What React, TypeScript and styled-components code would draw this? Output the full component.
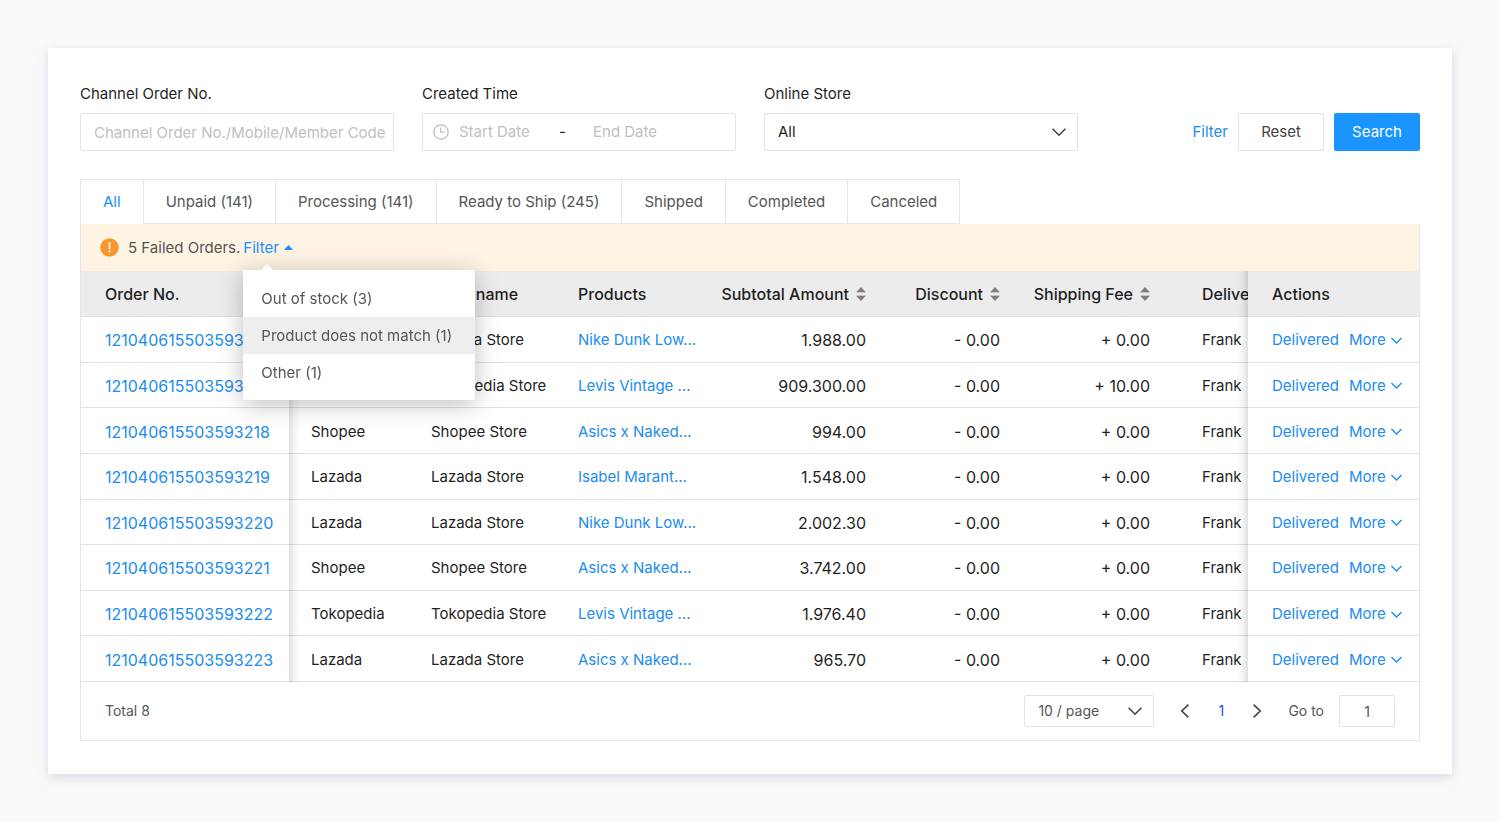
import React from "react";
import styled, { createGlobalStyle, css } from "styled-components";

const blue = "#1890ff";
const link = "#218cf0";
const line = "#e6e6e6";
const ink = "#1f1f1f";
const soft = "#555555";

const GlobalStyle = createGlobalStyle`
  *, *::before, *::after { box-sizing: border-box; }
  body {
    margin: 0;
    background: #f9f9f9;
    color: ${ink};
    font-family: Inter, "Liberation Sans", sans-serif;
    font-size: 15px;
    line-height: 24px;
  }
  button, input, select { font: inherit; color: inherit; }
  button { cursor: pointer; }
`;

const Page = styled.main`
  padding: 48px;
`;

const Card = styled.section`
  padding: 32px 32px 33px;
  background: #ffffff;
  box-shadow: 0 3px 10px rgba(70, 100, 140, 0.2);
`;

const SearchForm = styled.form`
  display: flex;
  align-items: flex-end;
  gap: 28px;
  margin-bottom: 28px;
`;

const Field = styled.div`
  flex: 0 1 314px;
  min-width: 0;
  display: flex;
  flex-direction: column;
  gap: 5px;
`;

const FieldLabel = styled.label`
  line-height: 28px;
`;

const boxed = css`
  border: 1px solid #e2e2e2;
  border-radius: 2px;
  background: #ffffff;
`;

const TextInput = styled.input`
  ${boxed}
  width: 100%;
  height: 38px;
  padding: 0 4px 0 13px;
  outline: none;
  &::placeholder { color: #bfbfbf; opacity: 1; }
`;

const DateRange = styled.div`
  ${boxed}
  display: flex;
  align-items: center;
  height: 38px;
  padding: 0 10px;
`;

const DateInput = styled.input`
  width: 100px;
  min-width: 0;
  padding: 0;
  border: 0;
  outline: none;
  background: transparent;
  &::placeholder { color: #bfbfbf; opacity: 1; }
`;

const ClockIcon = styled.svg`
  flex: none;
  width: 16px;
  height: 16px;
  margin-right: 10px;
`;

const Dash = styled.span`
  width: 34px;
`;

const SelectBox = styled.div<{ $small?: boolean }>`
  ${boxed}
  display: grid;
  grid-template-columns: 1fr 36px;
  align-items: center;
  width: ${(p) => (p.$small ? "130px" : "100%")};
  height: ${(p) => (p.$small ? "32px" : "38px")};
  color: ${(p) => (p.$small ? soft : ink)};
  select {
    grid-area: 1 / 1 / 2 / 3;
    width: 100%;
    height: 100%;
    padding: 0 13px;
    border: 0;
    outline: none;
    appearance: none;
    background: transparent;
  }
  svg {
    grid-area: 1 / 2;
    justify-self: center;
    color: #444444;
    pointer-events: none;
  }
`;

const FormActions = styled.div`
  display: flex;
  align-items: center;
  gap: 10px;
  margin-left: auto;
`;

const TextLink = styled.a`
  color: ${link};
  text-decoration: none;
  white-space: nowrap;
`;

const Button = styled.button<{ $primary?: boolean }>`
  width: 86px;
  height: 38px;
  padding: 0;
  border: 1px solid ${(p) => (p.$primary ? "#1a94ff" : "#e2e2e2")};
  border-radius: 2px;
  background: ${(p) => (p.$primary ? "#1a94ff" : "#ffffff")};
  color: ${(p) => (p.$primary ? "#ffffff" : "#444444")};
`;

const TabList = styled.div`
  display: flex;
  width: max-content;
  border: 1px solid ${line};
  border-bottom: 0;
`;

const Tab = styled.button<{ $active?: boolean }>`
  height: 44px;
  padding: 0 22px;
  border: 0;
  border-bottom: 1px solid ${(p) => (p.$active ? "#ffffff" : line)};
  background: #ffffff;
  color: ${(p) => (p.$active ? blue : soft)};
  & + & { border-left: 1px solid ${line}; }
`;

const Panel = styled.div`
  border: 1px solid ${line};
  border-top: 0;
`;

const Notice = styled.div`
  display: flex;
  align-items: center;
  height: 47px;
  padding-left: 19px;
  background: #fff4e3;
  color: ${soft};
`;

const AlertIcon = styled.svg`
  flex: none;
  width: 19px;
  height: 19px;
  margin-right: 9px;
`;

const Dropdown = styled.div`
  position: relative;
  margin-left: 3px;
`;

const DropdownToggle = styled.button`
  display: flex;
  align-items: center;
  gap: 5px;
  padding: 0;
  border: 0;
  background: none;
  color: ${blue};
`;

const Menu = styled.div`
  position: absolute;
  z-index: 5;
  top: 34px;
  left: 0;
  width: 232px;
  padding: 10px 0 9px;
  border-radius: 2px;
  background: #ffffff;
  box-shadow: 0 4px 24px rgba(0, 0, 0, 0.26);
  &::before {
    content: "";
    position: absolute;
    top: -6px;
    left: 18px;
    border: 6px solid transparent;
    border-top: 0;
    border-bottom-color: #ffffff;
  }
`;

const MenuItem = styled.button<{ $hover?: boolean }>`
  display: block;
  width: 100%;
  height: 37px;
  padding: 2px 18px 0;
  border: 0;
  background: ${(p) => (p.$hover ? "#eeeeee" : "transparent")};
  color: ${soft};
  text-align: left;
  white-space: nowrap;
`;

const TableScroll = styled.div`
  overflow-x: auto;
  scrollbar-width: none;
`;

const Table = styled.table`
  width: calc(100% + 62px);
  height: 411px;
  table-layout: fixed;
  border-collapse: separate;
  border-spacing: 0;
`;

type Pin = "left" | "right";
interface CellProps {
  $right?: boolean;
  $pin?: Pin;
  $pad?: number;
}

const cell = css<CellProps>`
  padding: 0 22px 0 ${(p) => p.$pad ?? 22}px;
  border-bottom: 1px solid #e2e2e2;
  text-align: ${(p) => (p.$right ? "right" : "left")};
  white-space: nowrap;
  ${(p) =>
    p.$pin &&
    css`
      position: sticky;
      z-index: 1;
      ${p.$pin}: 0;
      &::after {
        content: "";
        position: absolute;
        top: 0;
        bottom: -1px;
        ${p.$pin === "left" ? "left" : "right"}: 100%;
        width: 12px;
        background: linear-gradient(
          to ${p.$pin === "left" ? "right" : "left"},
          rgba(0, 0, 0, 0.12),
          rgba(0, 0, 0, 0.03) 50%,
          transparent
        );
      }
    `}
`;

const HeadCell = styled.th<CellProps>`
  ${cell}
  height: 46px;
  background: #ececec;
  font-size: 16px;
  font-weight: 500;
`;

const BodyCell = styled.td<CellProps & { $numeric?: boolean }>`
  ${cell}
  padding-top: 2px;
  background: #ffffff;
  font-size: ${(p) => (p.$numeric ? "16px" : "15px")};
`;

const SortButton = styled.button`
  display: inline-flex;
  align-items: center;
  gap: 7px;
  padding: 0;
  border: 0;
  background: none;
  font-weight: 500;
`;

const RowActions = styled.div`
  display: flex;
  align-items: center;
  gap: 10px;
`;

const MoreButton = styled.button`
  display: flex;
  align-items: center;
  gap: 5px;
  padding: 0;
  border: 0;
  background: none;
  color: ${link};
`;

const Footer = styled.footer`
  display: flex;
  align-items: center;
  height: 58px;
  padding: 0 24px;
  color: ${soft};
  font-size: 14px;
`;

const Pager = styled.nav`
  display: flex;
  align-items: center;
  gap: 13px;
  margin-left: auto;
`;

const Pages = styled.div`
  display: flex;
`;

const PageButton = styled.button<{ $current?: boolean }>`
  display: grid;
  place-items: center;
  width: 36px;
  height: 32px;
  padding: 0;
  border: 0;
  background: none;
  color: ${(p) => (p.$current ? "#1552f0" : "#444444")};
`;

const GoTo = styled.label`
  display: flex;
  align-items: center;
  gap: 15px;
`;

const PageInput = styled.input`
  ${boxed}
  width: 56px;
  height: 32px;
  padding: 0;
  outline: none;
  text-align: center;
`;

const Chevron = ({ size = 14, weight = 2 }: { size?: number; weight?: number }) => (
  <svg width={size} height={size} viewBox="0 0 14 14" fill="none" stroke="currentColor" strokeWidth={weight} aria-hidden="true">
    <path d="M0.6 3.8 7 10.2 13.4 3.8" />
  </svg>
);

const PageArrow = ({ next }: { next?: boolean }) => (
  <svg width="14" height="14" viewBox="0 0 14 14" fill="none" stroke="currentColor" strokeWidth="1.6" aria-hidden="true">
    <path d={next ? "M3.6 0.6 10.2 7 3.6 13.4" : "M10.4 0.6 3.8 7 10.4 13.4"} />
  </svg>
);

const SortIcon = () => (
  <svg width="10" height="14" viewBox="0 0 10 14" aria-hidden="true">
    <path d="M5 0 9.6 5H0.4Z" fill="#7d7d7d" />
    <path d="M0.4 5H9.6V6H0.4ZM0.4 8H9.6V9H0.4Z" fill="#c4c4c4" />
    <path d="M0.4 9H9.6L5 14Z" fill="#7d7d7d" />
  </svg>
);

const tabs = ["All", "Unpaid (141)", "Processing (141)", "Ready to Ship (245)", "Shipped", "Completed", "Canceled"];
const reasons = ["Out of stock (3)", "Product does not match (1)", "Other (1)"];

interface Column {
  title: string;
  width: number;
  right?: boolean;
  pin?: Pin;
  pad?: number;
}

const columns: Column[] = [
  { title: "Order No.", width: 208, pin: "left", pad: 24 },
  { title: "Channel", width: 120 },
  { title: "Store name", width: 147 },
  { title: "Products", width: 144 },
  { title: "Subtotal Amount", width: 188, right: true, pad: 0 },
  { title: "Discount", width: 134, right: true, pad: 0 },
  { title: "Shipping Fee", width: 150, right: true, pad: 0 },
  { title: "Delivery", width: 138, pad: 30 },
  { title: "Actions", width: 171, pin: "right", pad: 24 },
];

const orders = [
  ["121040615503593216", "Lazada", "Nike Dunk Low...", "1.988.00", "+ 0.00"],
  ["121040615503593217", "Tokopedia", "Levis Vintage ...", "909.300.00", "+ 10.00"],
  ["121040615503593218", "Shopee", "Asics x Naked...", "994.00", "+ 0.00"],
  ["121040615503593219", "Lazada", "Isabel Marant...", "1.548.00", "+ 0.00"],
  ["121040615503593220", "Lazada", "Nike Dunk Low...", "2.002.30", "+ 0.00"],
  ["121040615503593221", "Shopee", "Asics x Naked...", "3.742.00", "+ 0.00"],
  ["121040615503593222", "Tokopedia", "Levis Vintage ...", "1.976.40", "+ 0.00"],
  ["121040615503593223", "Lazada", "Asics x Naked...", "965.70", "+ 0.00"],
];

export default function App() {
  return (
    <Page>
      <GlobalStyle />
      <Card>
        <SearchForm onSubmit={(e) => e.preventDefault()}>
          <Field>
            <FieldLabel htmlFor="order">Channel Order No.</FieldLabel>
            <TextInput id="order" placeholder="Channel Order No./Mobile/Member Code" />
          </Field>
          <Field>
            <FieldLabel htmlFor="start">Created Time</FieldLabel>
            <DateRange>
              <ClockIcon viewBox="0 0 16 16" fill="none" stroke="#bdbdbd" strokeWidth="1.3" aria-hidden="true">
                <circle cx="8" cy="8" r="7.2" />
                <path d="M7.6 3.6V8.2H11.6" />
              </ClockIcon>
              <DateInput id="start" placeholder="Start Date" />
              <Dash>-</Dash>
              <DateInput aria-label="End date" placeholder="End Date" />
            </DateRange>
          </Field>
          <Field>
            <FieldLabel htmlFor="store">Online Store</FieldLabel>
            <SelectBox>
              <select id="store">
                <option>All</option>
              </select>
              <Chevron weight={1.6} />
            </SelectBox>
          </Field>
          <FormActions>
            <TextLink href="#filter">Filter</TextLink>
            <Button type="reset">Reset</Button>
            <Button type="submit" $primary>Search</Button>
          </FormActions>
        </SearchForm>

        <TabList role="tablist">
          {tabs.map((name, i) => (
            <Tab key={name} role="tab" aria-selected={i === 0} $active={i === 0}>{name}</Tab>
          ))}
        </TabList>

        <Panel>
          <Notice>
            <AlertIcon viewBox="0 0 19 19" aria-hidden="true">
              <circle cx="9.5" cy="9.5" r="9.3" fill="#fa9630" />
              <path d="M8.5 4.4H10.5L10.2 11H8.8Z" fill="#fff" />
              <circle cx="9.5" cy="13.4" r="1.1" fill="#fff" />
            </AlertIcon>
            5 Failed Orders.
            <Dropdown>
              <DropdownToggle aria-expanded="true">
                Filter
                <svg width="9" height="5" viewBox="0 0 9 5" aria-hidden="true">
                  <path d="M4.5 0 9 5H0Z" fill="currentColor" />
                </svg>
              </DropdownToggle>
              <Menu role="menu">
                {reasons.map((reason, i) => (
                  <MenuItem key={reason} role="menuitem" $hover={i === 1}>{reason}</MenuItem>
                ))}
              </Menu>
            </Dropdown>
          </Notice>

          <TableScroll>
            <Table>
              <colgroup>
                {columns.map((c) => (
                  <col key={c.title} width={c.width} />
                ))}
              </colgroup>
              <thead>
                <tr>
                  {columns.map((c) => (
                    <HeadCell key={c.title} scope="col" $right={c.right} $pin={c.pin} $pad={c.pad}>
                      {c.right ? <SortButton>{c.title}<SortIcon /></SortButton> : c.title}
                    </HeadCell>
                  ))}
                </tr>
              </thead>
              <tbody>
                {orders.map(([id, channel, product, subtotal, shipping]) => (
                  <tr key={id}>
                    <BodyCell $numeric $pin="left" $pad={24}><TextLink href="#order">{id}</TextLink></BodyCell>
                    <BodyCell>{channel}</BodyCell>
                    <BodyCell>{channel} Store</BodyCell>
                    <BodyCell><TextLink href="#product">{product}</TextLink></BodyCell>
                    <BodyCell $numeric $right>{subtotal}</BodyCell>
                    <BodyCell $numeric $right>- 0.00</BodyCell>
                    <BodyCell $numeric $right>{shipping}</BodyCell>
                    <BodyCell $pad={30}>Frank</BodyCell>
                    <BodyCell $pin="right" $pad={24}>
                      <RowActions>
                        <TextLink href="#delivered">Delivered</TextLink>
                        <MoreButton>More<Chevron size={11} weight={1.7} /></MoreButton>
                      </RowActions>
                    </BodyCell>
                  </tr>
                ))}
              </tbody>
            </Table>
          </TableScroll>

          <Footer>
            <span>Total 8</span>
            <Pager aria-label="Pagination">
              <SelectBox $small>
                <select aria-label="Rows per page">
                  <option>10 / page</option>
                </select>
                <Chevron weight={1.6} />
              </SelectBox>
              <Pages>
                <PageButton aria-label="Previous page"><PageArrow /></PageButton>
                <PageButton $current aria-current="page">1</PageButton>
                <PageButton aria-label="Next page"><PageArrow next /></PageButton>
              </Pages>
              <GoTo>
                Go to
                <PageInput defaultValue="1" />
              </GoTo>
            </Pager>
          </Footer>
        </Panel>
      </Card>
    </Page>
  );
}
